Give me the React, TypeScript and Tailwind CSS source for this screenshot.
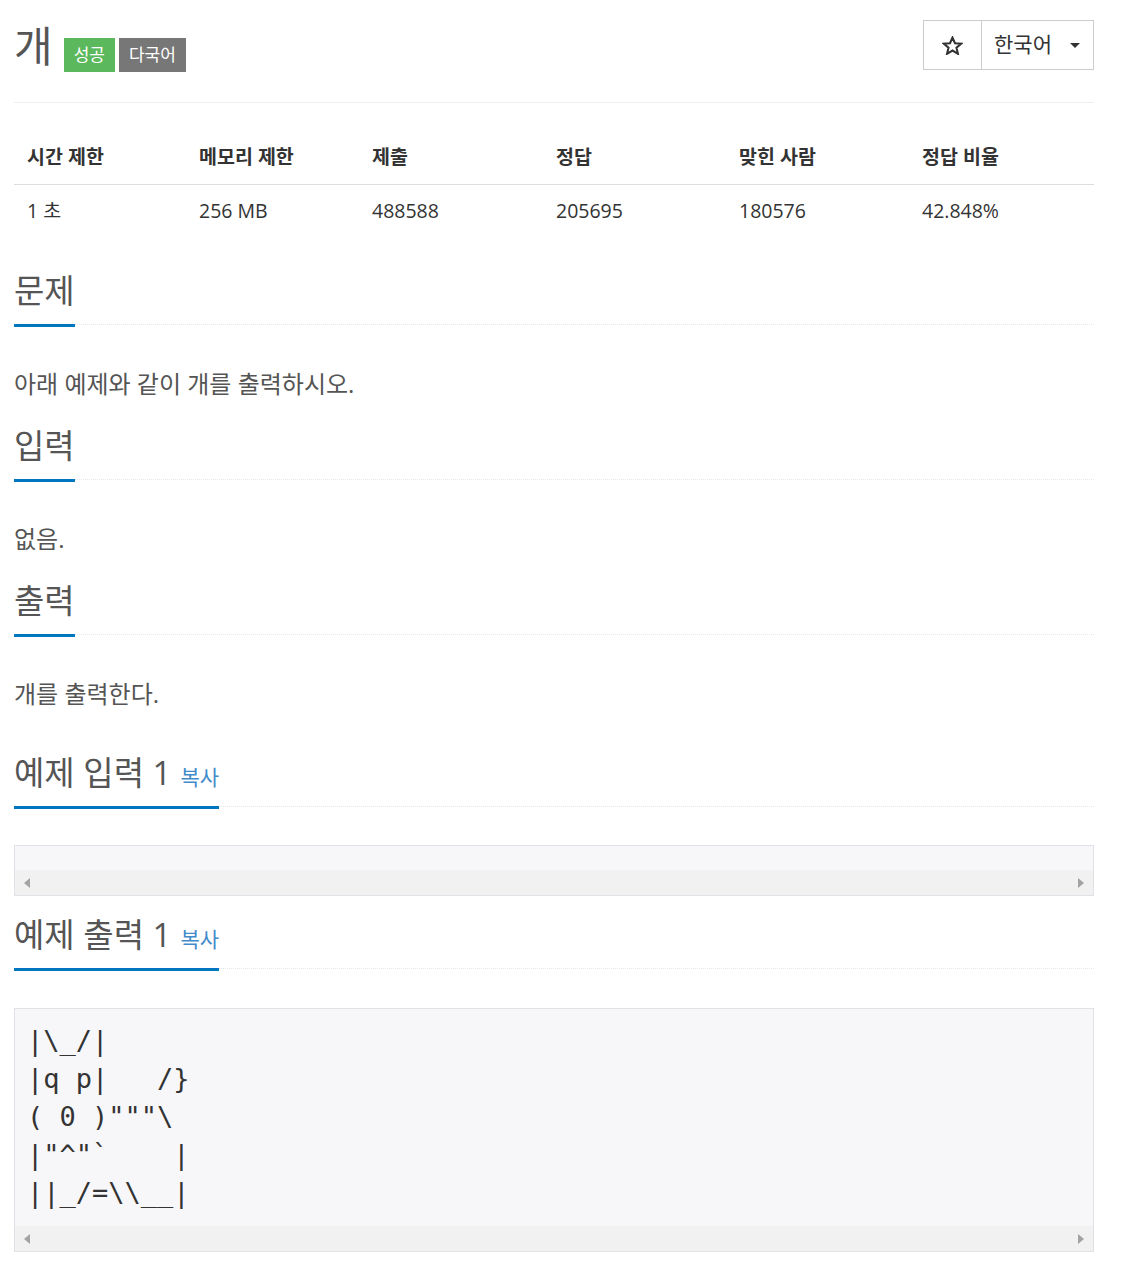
// Problem page: title, stats table, description sections and sample boxes
const STATS = [
  { label: "시간 제한", value: "1 초" },
  { label: "메모리 제한", value: "256 MB" },
  { label: "제출", value: "488588" },
  { label: "정답", value: "205695" },
  { label: "맞힌 사람", value: "180576" },
  { label: "정답 비율", value: "42.848%" },
];

const DOG = `|\\_/|
|q p|   /}
( 0 )"""\\
|"^"\`    |
||_/=\\\\__|`;

// Section heading with the blue underline over a dotted rule
function Headline({ title, copy }: { title: string; copy?: boolean }) {
  return (
    <div className="flex border-b border-dotted border-[#e4e9f0]">
      <h2 className="-mb-[3px] border-b-[3px] border-[#0076c0] pb-[13px] text-[33px] font-normal leading-[40px] text-[#555]">
        {title}
        {copy && <span className="ml-[9px] text-[21px] leading-none text-[#428bca]">복사</span>}
      </h2>
    </div>
  );
}

// Fake horizontal scrollbar at the bottom of a sample box
function ScrollBar() {
  return (
    <div className="flex h-[25px] items-center justify-between bg-[#f1f1f1] px-[9px]">
      <span className="h-0 w-0 border-y-[5px] border-r-[6px] border-y-transparent border-r-[#a3a3a3]" />
      <span className="h-0 w-0 border-y-[5px] border-l-[6px] border-y-transparent border-l-[#a3a3a3]" />
    </div>
  );
}

export default function App() {
  return (
    <div className="min-h-[1270px] bg-white font-['Open_Sans','Noto_Sans_CJK_KR',sans-serif] text-[#555]">
      <div className="ml-[14px] w-[1080px] pt-[20px]">
        {/* Title row */}
        <div className="flex items-start justify-between">
          <div className="flex items-start gap-[11px]">
            <h1 className="mt-[2px] text-[42px] font-normal leading-[48px] text-[#555]">개</h1>
            <div className="mt-[18px] flex gap-[4px] text-[17px] leading-[34px] text-white">
              <span className="bg-[#5cb85c] px-[10px]">성공</span>
              <span className="bg-[#777] px-[10px]">다국어</span>
            </div>
          </div>
          <div className="flex h-[50px] border border-[#ccc] text-[#333]">
            <button className="flex w-[58px] items-center justify-center border-r border-[#ccc]">
              <svg width="21" height="19" viewBox="0 0 24 22" fill="none" stroke="#333" strokeWidth="2.4" strokeLinejoin="miter">
                <path d="M12 1.8l2.9 6.6 7.2.5-5.5 4.7 1.7 7-6.3-3.8-6.3 3.8 1.7-7L1.9 8.9l7.2-.5z" />
              </svg>
            </button>
            <button className="flex w-[111px] items-center justify-between pl-[12px] pr-[13px] text-[21px]">
              <span>한국어</span>
              <span className="h-0 w-0 border-x-[5.5px] border-t-[5px] border-x-transparent border-t-[#333]" />
            </button>
          </div>
        </div>

        <hr className="mt-[30px] border-[#eee]" />

        {/* Stats table */}
        <div className="mt-[27px] grid grid-cols-[172px_173px_184px_183px_183px_1fr] text-[#333]">
          {STATS.map((s) => (
            <div key={s.label} className="border-b border-[#ddd] px-[13px] py-[14px] text-[19.5px] font-bold leading-[26px]">
              {s.label}
            </div>
          ))}
          {STATS.map((s) => (
            <div key={s.label} className="px-[13px] py-[13px] text-[19.5px] leading-[26px]">
              {s.value}
            </div>
          ))}
        </div>

        {/* Description */}
        <div className="mt-[34px]">
          <Headline title="문제" />
          <p className="mt-[44px] text-[24px] leading-[30px]">아래 예제와 같이 개를 출력하시오.</p>
        </div>
        <div className="mt-[27px]">
          <Headline title="입력" />
          <p className="mt-[44px] text-[24px] leading-[30px]">없음.</p>
        </div>
        <div className="mt-[27px]">
          <Headline title="출력" />
          <p className="mt-[44px] text-[24px] leading-[30px]">개를 출력한다.</p>
        </div>

        {/* Samples */}
        <div className="mt-[44px]">
          <Headline title="예제 입력 1" copy />
          <div className="mt-[38px] border border-[#e1e1e8] bg-[#f7f7f9]">
            <div className="h-[24px]" />
            <ScrollBar />
          </div>
        </div>
        <div className="mt-[19px]">
          <Headline title="예제 출력 1" copy />
          <div className="mt-[39px] border border-[#e1e1e8] bg-[#f7f7f9]">
            <pre className="pb-[14px] pl-[12px] pt-[13px] font-['DejaVu_Sans_Mono',monospace] text-[27px] leading-[38px] text-[#333]">
              {DOG}
            </pre>
            <ScrollBar />
          </div>
        </div>
      </div>
    </div>
  );
}
